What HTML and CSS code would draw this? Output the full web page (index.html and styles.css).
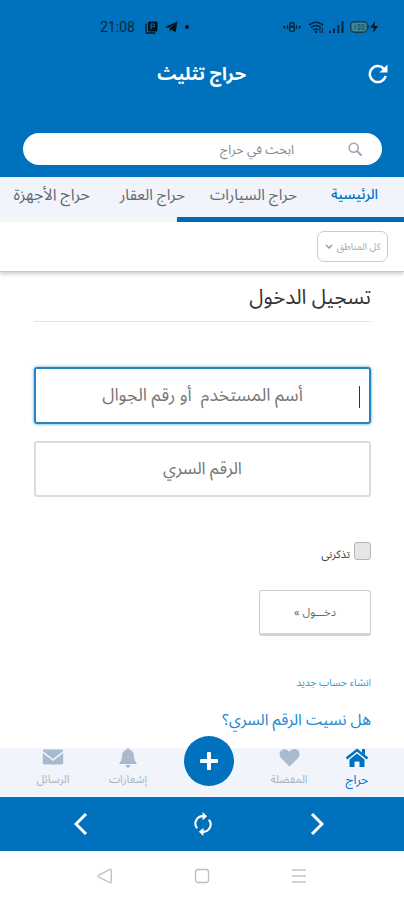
FILE: index.html
```html
<!DOCTYPE html>
<html lang="ar" dir="rtl">
<head>
<meta charset="utf-8">
<title>حراج تثليث</title>
<link rel="stylesheet" href="styles.css">
</head>
<body>
<div class="phone">
  <header class="top">
    <div class="status" dir="ltr">
      <span class="clock">21:08</span>
      <svg class="st-app" width="13" height="13" viewBox="0 0 13 13"><path d="M1 2.500v8.300q0 1.200 1.200 1.200h8" fill="none" stroke="#07111c" stroke-width="1.300"/><rect x="3" y="0.500" width="9.500" height="10" rx="1.500" fill="#07111c"/><path d="M6 8.500V3h3.500v2.700H6" fill="none" stroke="#0072bd"/></svg>
      <svg class="st-send" width="13" height="12" viewBox="0 0 13 12"><path d="M0 6 12.500.500 10.500 11.500 6.500 8.500 5 10.500 4.500 7.300 9.500 3.200 3.300 7z" fill="#07111c"/></svg>
      <i class="st-dot"></i>
      <span class="grow"></span>
      <svg width="18" height="12" viewBox="0 0 18 12"><g fill="none" stroke="#07263f" stroke-width="1.300"><circle cx="9" cy="3.700" r="2.200"/><circle cx="9" cy="8" r="2.600"/><path d="M4.500 4v4M13.500 4v4M2 5 .7 6 2 7.500M16 5l1.300 1L16 7.500"/></g></svg>
      <svg class="st-wifi" width="16" height="13" viewBox="0 0 16 13"><g fill="none" stroke="#07263f" stroke-width="1.600"><path d="M1 4Q8-1.500 15 4M3 6.500q5-4 10 0M5.300 9q2.700-2 5 0"/><path d="M12 12V7m-1.500 1.500L12 7M14.500 7v5m-1.300-1.500 1.300 1.500" stroke-width="1"/></g><circle cx="8" cy="11" r="1.300" fill="#07263f"/></svg>
      <svg class="st-bars" width="15" height="12" viewBox="0 0 15 12"><path d="M1 12V9.500M5 12V7.500M9.300 12V4M13.500 12V0" stroke="#07263f" stroke-width="2"/></svg>
      <svg class="st-bat" width="29" height="12" viewBox="0 0 29 12"><rect x=".7" y=".7" width="16.600" height="10.600" rx="4" fill="#42869a" stroke="#173d4e" stroke-width="1.400"/><path d="M5 3.500v5M8 3.500h2v5H8zM12 3.500h2v5h-2z" stroke="#1c586d" fill="none"/><path d="M18.800 4v4" stroke="#173d4e" stroke-width="1.200"/><path d="M25 0 20.500 6.800H24L23 12l5-7h-3.500z" fill="#07111c"/></svg>
    </div>
    <div class="appbar">
      <svg class="reload" width="20" height="20" viewBox="0 0 20 20"><path d="M15.800 4.700A8 8 0 1 0 17.600 12" fill="none" stroke="#fff" stroke-width="2.500"/><path d="M19.500.5v8h-8z" fill="#fff"/></svg>
      <h1 class="title">حراج تثليث</h1>
    </div>
    <div class="search">
      <svg width="14" height="14" viewBox="0 0 14 14"><g fill="none" stroke="#9aa7b8"><circle cx="5.700" cy="5.700" r="4.500" stroke-width="1.600"/><path d="m9 9 4 4" stroke-width="2" stroke-linecap="round"/></g></svg>
      <span class="search-hint">ابحث في حراج</span>
    </div>
  </header>
  <nav class="tabs">
    <span class="tab tab-on">الرئيسية</span>
    <span class="tab">حراج السيارات</span>
    <span class="tab">حراج العقار</span>
    <span class="tab tab-tech">حراج الأجهزة</span>
  </nav>
  <div class="track"><div class="thumb"></div></div>
  <div class="filter">
    <div class="region"><span>كل المناطق</span><svg width="8" height="6" viewBox="0 0 8 6"><path d="m1 1 3 3 3-3" fill="none" stroke="#999" stroke-width="1.500"/></svg></div>
  </div>
  <main class="form">
    <h2 class="heading">تسجيل الدخول</h2>
    <div class="field field-on"><i class="caret"></i><span>أسم المستخدم &nbsp;أو رقم الجوال</span></div>
    <div class="field"><span>الرقم السري</span></div>
    <div class="remember"><i class="check"></i><span>تذكرنى</span></div>
    <div class="submit"><span>دخـــول »</span></div>
    <a class="signup">انشاء حساب جديد</a>
    <a class="forgot">هل نسيت الرقم السري؟</a>
  </main>
  <nav class="dock">
    <div class="item item-on"><svg width="24" height="20" viewBox="0 0 24 20"><path d="M1.500 10.500 12 2l10.500 8.500" fill="none" stroke="#0072bd" stroke-width="2.500"/><path d="M17 1h3v6l-3-2.500zM4.500 11.500 12 5.500l7.500 6V19h-5v-5.500h-5V19h-5z" fill="#0072bd"/></svg><span>حراج</span></div>
    <div class="item"><svg width="21" height="20" viewBox="0 0 22 20"><path d="M11 19 2.300 10.300C-.3 7.500.2 3.300 3 1.500 5.700-.1 9 .9 11 3.600 13-.1 17.300-.1 19.500 1.700c2.500 2 2.600 6 .2 8.600z" fill="#a9bad0"/></svg><span>المفضلة</span></div>
    <div class="item"><div class="add"><svg width="18" height="18" viewBox="0 0 18 18"><path d="M9 1.500v15M1.500 9h15" stroke="#fff" stroke-width="4" stroke-linecap="round"/></svg></div></div>
    <div class="item"><svg width="20" height="20" viewBox="0 0 20 20"><path d="M10 0q1.300 0 1.300 1.800Q16 3 16 8q0 5 2.500 6.500v1.500H1.500v-1.500Q4 13 4 8q0-5 4.700-6.200Q8.700 0 10 0zM7.500 17h5q-.5 2.800-2.500 2.800T7.500 17z" fill="#a9bad0"/></svg><span>إشعارات</span></div>
    <div class="item"><svg width="22" height="20" viewBox="0 0 22 20"><path d="M2 1.500h18q1.200 0 1.200 1.500L11 11 .8 3Q.8 1.500 2 1.500zM.8 5 11 13 21.200 5v10q0 1.500-1.500 1.500H2.300Q.8 16.500.8 15z" fill="#a9bad0"/></svg><span>الرسائل</span></div>
  </nav>
  <div class="browser" dir="ltr">
    <svg width="14" height="22" viewBox="0 0 14 22"><path d="M12 1 2 11l10 10" fill="none" stroke="#fff" stroke-width="3"/></svg>
    <svg class="sync" width="20" height="24" viewBox="0 0 20 26"><path d="M10 4.500a8 8 0 0 0-6.300 13.200M10 21.500a8 8 0 0 0 6.300-13.200" fill="none" stroke="#fff" stroke-width="2.300"/><path d="m9.500 0 5 4.500-5 4.500zM10.500 17v9l-5-4.500z" fill="#fff"/></svg>
    <svg width="14" height="22" viewBox="0 0 14 22"><path d="m2 1 10 10L2 21" fill="none" stroke="#fff" stroke-width="3"/></svg>
  </div>
  <div class="system" dir="ltr">
    <svg width="16" height="16" viewBox="0 0 16 16"><path d="M14.300 2.500v11q0 1.500-1.500 1L1.500 9q-1-.8 0-1.600L12.800 1.500q1.500-.5 1.500 1z" fill="none" stroke="#bdbdbd" stroke-width="1.300"/></svg>
    <svg width="16" height="16" viewBox="0 0 16 16"><rect x="1.500" y="1.500" width="13" height="13" rx="2.500" fill="none" stroke="#bdbdbd" stroke-width="1.300"/></svg>
    <svg width="16" height="16" viewBox="0 0 16 16"><path d="M1 2h14M1 8h14M1 14h14" stroke="#c4c4c4" stroke-width="1.300"/></svg>
  </div>
</div>
</body>
</html>
```
FILE: styles.css
```css
* { box-sizing: border-box; }
body { margin: 0; background: #fff; font-family: "Noto Sans Arabic", "Noto Naskh Arabic", "DejaVu Sans", sans-serif; }
svg { display: block; flex: none; }
span, a, h1, h2 { white-space: nowrap; }
.phone { width: 404px; height: 900px; display: flex; flex-direction: column; overflow: hidden; }
.top { height: 177px; flex: none; background: #0072bd; display: flex; flex-direction: column; }
.status { height: 54px; padding: 0 25px 0 100px; display: flex; align-items: center; flex: none; }
.clock { font: 14px/16px Roboto, sans-serif; color: #07263f; width: 45px; }
.st-send { margin-left: 7px; }
.st-dot { width: 4px; height: 4px; border-radius: 50%; background: #07111c; margin-left: 7px; }
.grow { flex: 1; }
.st-wifi { margin-left: 7px; }
.st-bars { margin-left: 5px; }
.st-bat { margin-left: 6px; }
.appbar { height: 44px; flex: none; display: flex; align-items: center; padding: 0 16px 4px; }
.title { margin: 0 122px 0 0; font-size: 18px; line-height: 30px; color: #fff; font-weight: 700; }
.search { margin: 35px 22px 0 23px; height: 32px; border-radius: 16px; background: #fff; display: flex; align-items: center; padding-right: 20px; gap: 54px; flex: none; }
.search-hint { font-size: 12.800px; color: #888; }
.tabs { height: 40px; flex: none; background: #f1f4fa; display: grid; grid-template-columns: 81px 112px 95px 77px; align-items: center; padding: 0 26px 5px 0; }
.tab { font-size: 15.300px; line-height: 30px; color: #666970; }
.tab-on { font-size: 14px; line-height: 34px; color: #0072bd; font-weight: 500; }
.tab-tech { font-size: 16px; }
.track { height: 5px; flex: none; background: #f3f7fa; }
.thumb { width: 227px; height: 5px; background: #006cb4; }
.filter { height: 50px; flex: none; padding: 9px 16px; border-bottom: 1px solid #c9c9c9; box-shadow: 0 2px 4px #0003; }
.region { width: 71px; height: 31px; border: 1.500px solid #ccc; border-radius: 7px; display: flex; align-items: center; justify-content: center; gap: 4px; font-size: 9.500px; color: #aaa; }
.form { height: 476px; flex: none; padding: 0 33px 0 34px; display: flex; flex-direction: column; align-items: flex-start; }
.heading { margin: 0; height: 50px; width: 100%; padding-top: 10px; border-bottom: 1px solid #e5e5e5; font-size: 20.500px; line-height: 32px; font-weight: 400; color: #333; }
.field { width: 337px; height: 56px; flex: none; margin-top: 17px; border: 2px solid #dcdcdc; border-radius: 3px; display: flex; align-items: center; justify-content: center; font-size: 17px; color: #777; position: relative; }
.field-on { margin-top: 45px; height: 57px; font-size: 17.600px; border-color: #2a82bf; box-shadow: 0 0 3px #3a93d0; }
.caret { position: absolute; right: 9px; top: 17px; width: 1px; height: 22px; background: #333; }
.remember { display: flex; gap: 4px; margin-top: 45px; height: 20px; font-size: 11px; line-height: 26px; color: #444; flex: none; }
.check { width: 17px; height: 18px; border: 1.500px solid #b5b5b5; border-radius: 3px; background: #e5e5e5; }
.submit { width: 112px; height: 46px; margin-top: 28px; border: 1px solid #ccc; border-bottom: 3px solid #d4d4d4; border-radius: 3px; display: flex; align-items: center; justify-content: center; font-size: 11px; color: #666; flex: none; }
.signup { margin-top: 37px; font-size: 10.300px; line-height: 20px; color: #3b97d8; }
.forgot { margin-top: 11px; font-size: 15.700px; line-height: 32px; color: #2388d4; }
.dock { height: 49px; flex: none; background: #f1f4fa; display: grid; grid-template-columns: 80px 56px 104px 58px 92px; padding-right: 7px; align-items: start; position: relative; }
.item { display: flex; flex-direction: column; align-items: center; font-size: 11.200px; line-height: 24px; color: #aab4c2; }
.item-on { font-size: 12.500px; color: #0072bd; }
.add { width: 50px; height: 50px; margin-top: -12px; border-radius: 50%; background: #0072bd; display: flex; align-items: center; justify-content: center; }
.browser { height: 54px; flex: none; background: #0072bd; display: flex; align-items: center; justify-content: space-between; padding: 0 80px 0 74px; }
.sync { margin-left: 8px; }
.system { height: 49px; flex: none; display: flex; align-items: center; justify-content: space-between; padding: 0 97px; }
```
